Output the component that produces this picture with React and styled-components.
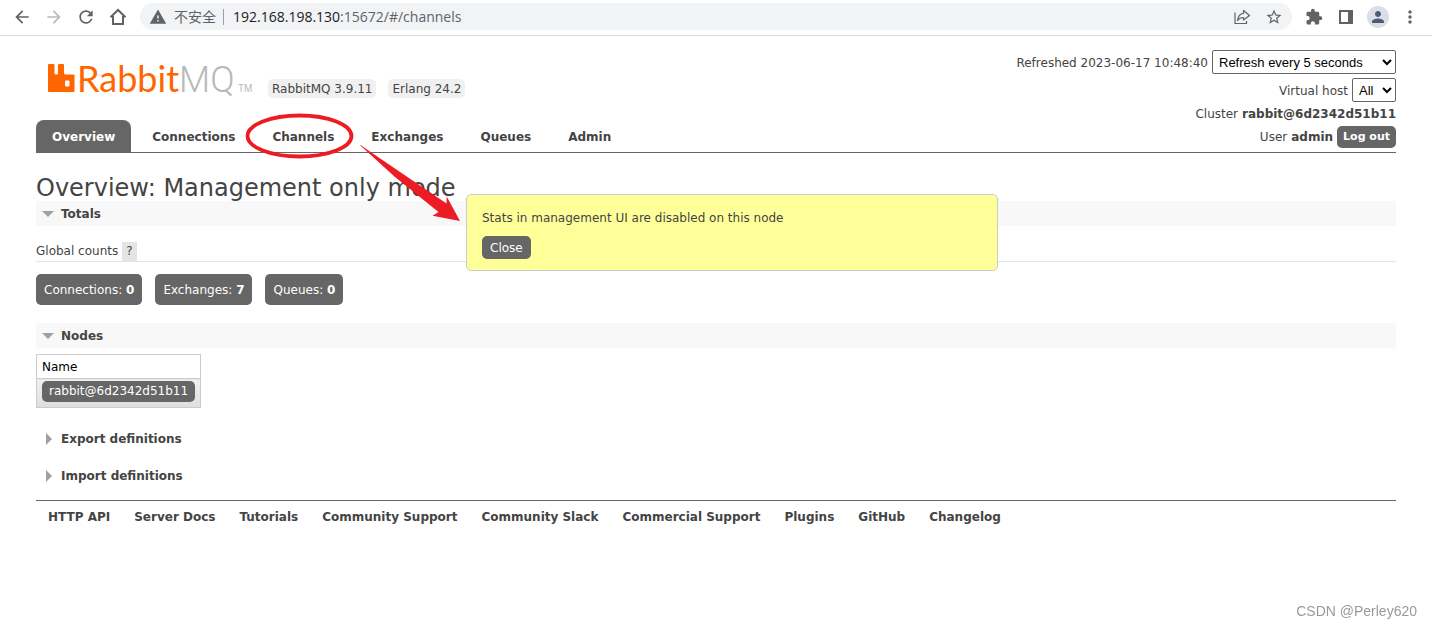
import React, { useState } from "react";
import styled, { createGlobalStyle } from "styled-components";
import {
  MdArrowBack,
  MdArrowForward,
  MdRefresh,
  MdWarning,
  MdStarBorder,
  MdExtension,
  MdPerson,
  MdMoreVert,
} from "react-icons/md";

const themeVars = {
  text: "#444",
  dark: "#666",
  orange: "#f60",
  red: "#ed1c24",
  contentFont: "Verdana, 'DejaVu Sans', sans-serif",
  browserFont: "'Open Sans', 'Noto Sans CJK SC', sans-serif",
};

const tabs = ["Overview", "Connections", "Channels", "Exchanges", "Queues", "Admin"];

const counts = [
  { label: "Connections", value: 0 },
  { label: "Exchanges", value: 7 },
  { label: "Queues", value: 0 },
];

const footerLinks = [
  "HTTP API",
  "Server Docs",
  "Tutorials",
  "Community Support",
  "Community Slack",
  "Commercial Support",
  "Plugins",
  "GitHub",
  "Changelog",
];

const BrowserBar = () => {
  return <Bar>
    <BarButton aria-label="Back"><MdArrowBack size={20} /></BarButton>
    <BarButton aria-label="Forward" $faded><MdArrowForward size={20} /></BarButton>
    <BarButton aria-label="Reload"><MdRefresh size={20} /></BarButton>
    <BarButton aria-label="Home">
      <svg width="18" height="18" viewBox="0 0 18 18" fill="none" stroke="currentColor" strokeWidth="2">
        <path d="M1.5 9.2 9 2l7.500 7.200M4 8v8h10V8" />
      </svg>
    </BarButton>
    <AddressBar>
      <MdWarning size={18} />
      <Insecure>不安全</Insecure>
      <Url><Host>192.168.198.130</Host>:15672/#/channels</Url>
      <BarButton aria-label="Share">
        <svg width="18" height="18" viewBox="0 0 18 18" fill="none" stroke="currentColor" strokeWidth="1.200">
          <path d="M2 4.500V15.500H13.500V13" />
          <path d="M10.500 2.500 16.500 7.500l-6 4.500V9.500C8 9.500 6 10.400 4.500 12.500 5 8.500 7 5.600 10.500 5.300Z" strokeLinejoin="round" />
        </svg>
      </BarButton>
      <BarButton aria-label="Bookmark"><MdStarBorder size={18} /></BarButton>
    </AddressBar>
    <BarButton aria-label="Extensions"><MdExtension size={18} /></BarButton>
    <BarButton aria-label="Side panel">
      <svg width="14" height="14" viewBox="0 0 14 14">
        <path fill="currentColor" fillRule="evenodd" d="M0 0h14v14H0zM2 2v10h7V2z" />
      </svg>
    </BarButton>
    <BarButton aria-label="Profile"><Avatar><MdPerson size={18} /></Avatar></BarButton>
    <BarButton aria-label="Menu"><MdMoreVert size={20} /></BarButton>
  </Bar>;
};

const Logo = () => {
  return <svg width="208" height="50" viewBox="0 -5 208 50" role="img" aria-label="RabbitMQ">
    <path
      fill={themeVars.orange}
      fillRule="evenodd"
      d="M1 4h4.500q1 0 1 1v8q0 1.500 1.500 1.500h.500q1.500 0 1.500-1.500V5q0-1 1-1h4q1 0 1 1v8q0 1.500 1.500 1.500H25.500q1 0 1 1V31q0 1-1 1H1q-1 0-1-1V5q0-1 1-1zM17 21.500v4q0 1 1 1h2.500q1 0 1-1v-4q0-1-1-1H18q-1 0-1 1z"
    />
    <LogoText x="29" y="32" fill={themeVars.orange}>Rabbit</LogoText>
    <LogoText x="131" y="32" fill="#b8b8b8" $light>MQ</LogoText>
    <TradeMark x="190" y="32" fill="#b8b8b8">TM</TradeMark>
  </svg>;
};

const Section = ({ title, open, children }) => {
  const [visible, setVisible] = useState(open);

  return <section>
    <SectionTitle $open={visible}>
      <SectionToggle onClick={() => setVisible(!visible)} aria-expanded={visible}>
        <Marker>
          <svg width="12" height="12" viewBox="0 0 12 12" fill="#a0a0a0">
            <path d={visible ? "M0 3h12L6 9z" : "M4 0v12l6-6z"} />
          </svg>
        </Marker>
        {title}
      </SectionToggle>
    </SectionTitle>
    {visible && children}
  </section>;
};

const Status = () => {
  return <StatusList>
    <StatusRow>
      <label htmlFor="refresh">Refreshed 2023-06-17 10:48:40</label>
      <Select id="refresh" $width="184px"><option>Refresh every 5 seconds</option></Select>
    </StatusRow>
    <StatusRow>
      <label htmlFor="vhost">Virtual host</label>
      <Select id="vhost" $width="44px"><option>All</option></Select>
    </StatusRow>
    <StatusRow>Cluster <b>rabbit@6d2342d51b11</b></StatusRow>
    <StatusRow>User <b>admin</b> <Button $bold>Log out</Button></StatusRow>
  </StatusList>;
};

const App = () => {
  const [warning, setWarning] = useState(true);

  return <>
    <GlobalStyle />
    <BrowserBar />
    <Page>
      <Header>
        <Brand>
          <Logo />
          <Version>RabbitMQ 3.9.11</Version>
          <Version>Erlang 24.2</Version>
        </Brand>
        <Status />
        <Tabs>
          {tabs.map((tab) => {
            return <Tab key={tab} href="#/" $selected={tab === "Overview"}>{tab}</Tab>
          })}
        </Tabs>
      </Header>
      <main>
        <PageTitle>Overview: Management only mode</PageTitle>
        <Section title="Totals" open>
          <Subtitle>Global counts <Help aria-label="Help">?</Help></Subtitle>
          <Counts>
            {counts.map((count) => {
              return <CountLink key={count.label} href="#/">{count.label}: <b>{count.value}</b></CountLink>
            })}
          </Counts>
        </Section>
        <Section title="Nodes" open>
          <NodeTable>
            <thead><tr><th>Name</th></tr></thead>
            <tbody><tr><td><NodeLink href="#/nodes">rabbit@6d2342d51b11</NodeLink></td></tr></tbody>
          </NodeTable>
        </Section>
        <Definitions>
          <Section title="Export definitions" open={false} />
          <Section title="Import definitions" open={false} />
        </Definitions>
      </main>
      <Footer>
        {footerLinks.map((link) => <FooterLink key={link} href="#/">{link}</FooterLink>)}
      </Footer>
      {warning && <Popup role="alert">
        <span>Stats in management UI are disabled on this node</span>
        <Button onClick={() => setWarning(false)}>Close</Button>
      </Popup>}
      <Annotation width="230" height="120" viewBox="240 106 230 120" fill={themeVars.red}>
        <ellipse cx="299.500" cy="136" rx="52" ry="20.500" fill="none" stroke={themeVars.red} strokeWidth="3.800" />
        <path d="M359.500 144.800Q361 145 364 147.500L446.500 203.500 446.700 196.500 460 221 432.500 215.800 438.500 212 395 177Z" />
      </Annotation>
    </Page>
    <Watermark>CSDN @Perley620</Watermark>
  </>;
};

const GlobalStyle = createGlobalStyle`
  * {
    box-sizing: border-box;
  }
  body {
    margin: 0;
    background: #fff;
    color: ${themeVars.text};
    font: 12px/16px ${themeVars.contentFont};
  }
  a {
    color: inherit;
    text-decoration: none;
  }
  button {
    font: inherit;
    color: inherit;
    border: none;
    background: none;
    padding: 0;
    cursor: pointer;
  }
`;

const Bar = styled.div`
  display: flex;
  align-items: center;
  height: 36px;
  padding: 0 6px 2px;
  border-bottom: 1px solid #dadce0;
  color: #5f6368;
  font-family: ${themeVars.browserFont};
`;

const BarButton = styled.button`
  display: flex;
  flex: none;
  align-items: center;
  justify-content: center;
  width: 32px;
  height: 28px;
  color: ${({ $faded }) => ($faded ? "#bababa" : "#5f6368")};
`;

const AddressBar = styled.div`
  display: flex;
  flex: 1;
  align-items: center;
  height: 27px;
  margin: 0 6px;
  padding: 0 2px 0 9px;
  border-radius: 14px;
  background: #f1f3f4;
`;

const Insecure = styled.span`
  margin: 0 9px 0 7px;
  padding-right: 7px;
  border-right: 1px solid #9aa0a6;
  font-size: 14px;
  line-height: 16px;
`;

const Url = styled.span`
  flex: 1;
  font-size: 14px;
`;

const Host = styled.span`
  color: #202124;
`;

const Avatar = styled.span`
  display: flex;
  align-items: center;
  justify-content: center;
  width: 22px;
  height: 22px;
  border-radius: 50%;
  background: #dadfe6;
  color: #4f5b76;
`;

const Page = styled.div`
  position: relative;
  padding: 0 36px;
`;

const Header = styled.header`
  display: grid;
  grid-template-columns: 1fr auto;
  grid-template-rows: 84px 32px;
  border-bottom: 1px solid ${themeVars.dark};
`;

const Brand = styled.div`
  display: flex;
  align-items: center;
  gap: 12px;
  padding: 4px 0 0 12px;
`;

const LogoText = styled.text`
  font-family: ${({ $light }) => ($light ? "Roboto" : "Lato")}, sans-serif;
  font-size: 36px;
  font-weight: ${({ $light }) => ($light ? 300 : 400)};
`;

const TradeMark = styled.text`
  font-family: 'Liberation Sans', sans-serif;
  font-size: 10px;
`;

const Version = styled.span`
  margin-top: 17px;
  padding: 2px 4px 1px;
  border-radius: 5px;
  background: #f0f0f0;
`;

const StatusList = styled.div`
  grid-column: 2;
  grid-row: 1 / 3;
  display: flex;
  flex-direction: column;
  gap: 4px;
  padding-top: 14px;
`;

const StatusRow = styled.div`
  display: flex;
  align-items: center;
  justify-content: flex-end;
  gap: 4px;

  label {
    padding-top: 2px;
  }
`;

const Select = styled.select`
  width: ${({ $width }) => $width};
  height: 24px;
  padding: 0 2px;
  border: 1px solid #666;
  border-radius: 2px;
  background: #fff;
  color: #000;
  font: 13px 'Liberation Sans', Arial, sans-serif;
`;

const Button = styled.button`
  padding: ${({ $bold }) => ($bold ? "3px 6px" : "4px 8px 3px")};
  border-radius: 5px;
  background: ${themeVars.dark};
  color: #fff;
  font-size: ${({ $bold }) => ($bold ? "11px" : "12px")};
  line-height: 16px;
  font-weight: ${({ $bold }) => ($bold ? "bold" : "normal")};
`;

const Tabs = styled.nav`
  grid-column: 1;
  grid-row: 2;
  display: flex;
  gap: 5px;
`;

const Tab = styled.a`
  padding: 9px 16px 7px;
  border-radius: 8px 8px 0 0;
  font-weight: bold;
  background: ${({ $selected }) => ($selected ? themeVars.dark : "transparent")};
  color: ${({ $selected }) => ($selected ? "#fff" : themeVars.text)};
`;

const PageTitle = styled.h1`
  margin: 0;
  padding-top: 22px;
  font-size: 24px;
  line-height: 26px;
  font-weight: normal;
`;

const SectionTitle = styled.h2`
  margin: 0;
  font-size: 12px;
  background: ${({ $open }) => ($open ? "#f8f8f8" : "transparent")};
`;

const SectionToggle = styled.button`
  display: flex;
  align-items: center;
  width: 100%;
  height: 25px;
  padding-left: 6px;
`;

const Marker = styled.span`
  display: flex;
  width: 19px;
`;

const Subtitle = styled.h3`
  display: flex;
  align-items: flex-end;
  gap: 4px;
  margin: 14px 0 12px;
  border-bottom: 1px solid #e4e4e4;
  font-size: 12px;
  font-weight: normal;
  line-height: 19px;
  padding-top: 2px;
`;

const Help = styled.button`
  padding: 0 4px;
  background: #e4e4e4;
`;

const Counts = styled.div`
  display: flex;
  gap: 13px;
  margin-bottom: 18px;
`;

const CountLink = styled.a`
  padding: 9px 8px 7px;
  border-radius: 5px;
  background: ${themeVars.dark};
  color: #fff;
  line-height: 15px;
`;

const NodeTable = styled.table`
  margin-top: 6px;
  border-collapse: collapse;

  th, td {
    padding: 4px 5px 3px;
    border: 1px solid #ccc;
    text-align: left;
    font-weight: normal;
    color: #000;
  }
  td {
    padding: 2px 5px 5px;
    background: linear-gradient(#f0f0f0, #dedede);
  }
`;

const NodeLink = styled.a`
  display: block;
  padding: 3px 7px;
  border-radius: 5px;
  background: ${themeVars.dark};
  color: #fff;
  line-height: 15px;
`;

const Definitions = styled.div`
  display: flex;
  flex-direction: column;
  gap: 12px;
  padding: 18px 0 12px;
`;

const Footer = styled.footer`
  display: flex;
  flex-wrap: wrap;
  gap: 24px;
  padding: 8px 12px;
  border-top: 1px solid ${themeVars.dark};
`;

const FooterLink = styled.a`
  font-weight: bold;
`;

const Popup = styled.div`
  position: absolute;
  top: 158px;
  left: 50%;
  display: flex;
  flex-direction: column;
  align-items: flex-start;
  gap: 10px;
  width: 532px;
  margin-left: -250px;
  padding: 15px 15px 11px;
  border: 1px solid #ccc;
  border-radius: 5px;
  background: #ff9;
`;

const Annotation = styled.svg`
  position: absolute;
  top: 70px;
  left: 240px;
  pointer-events: none;
`;

const Watermark = styled.div`
  position: fixed;
  right: 15px;
  bottom: 8px;
  color: #999;
  font: 14px/18px 'Liberation Sans', Arial, sans-serif;
`;

export default App;
